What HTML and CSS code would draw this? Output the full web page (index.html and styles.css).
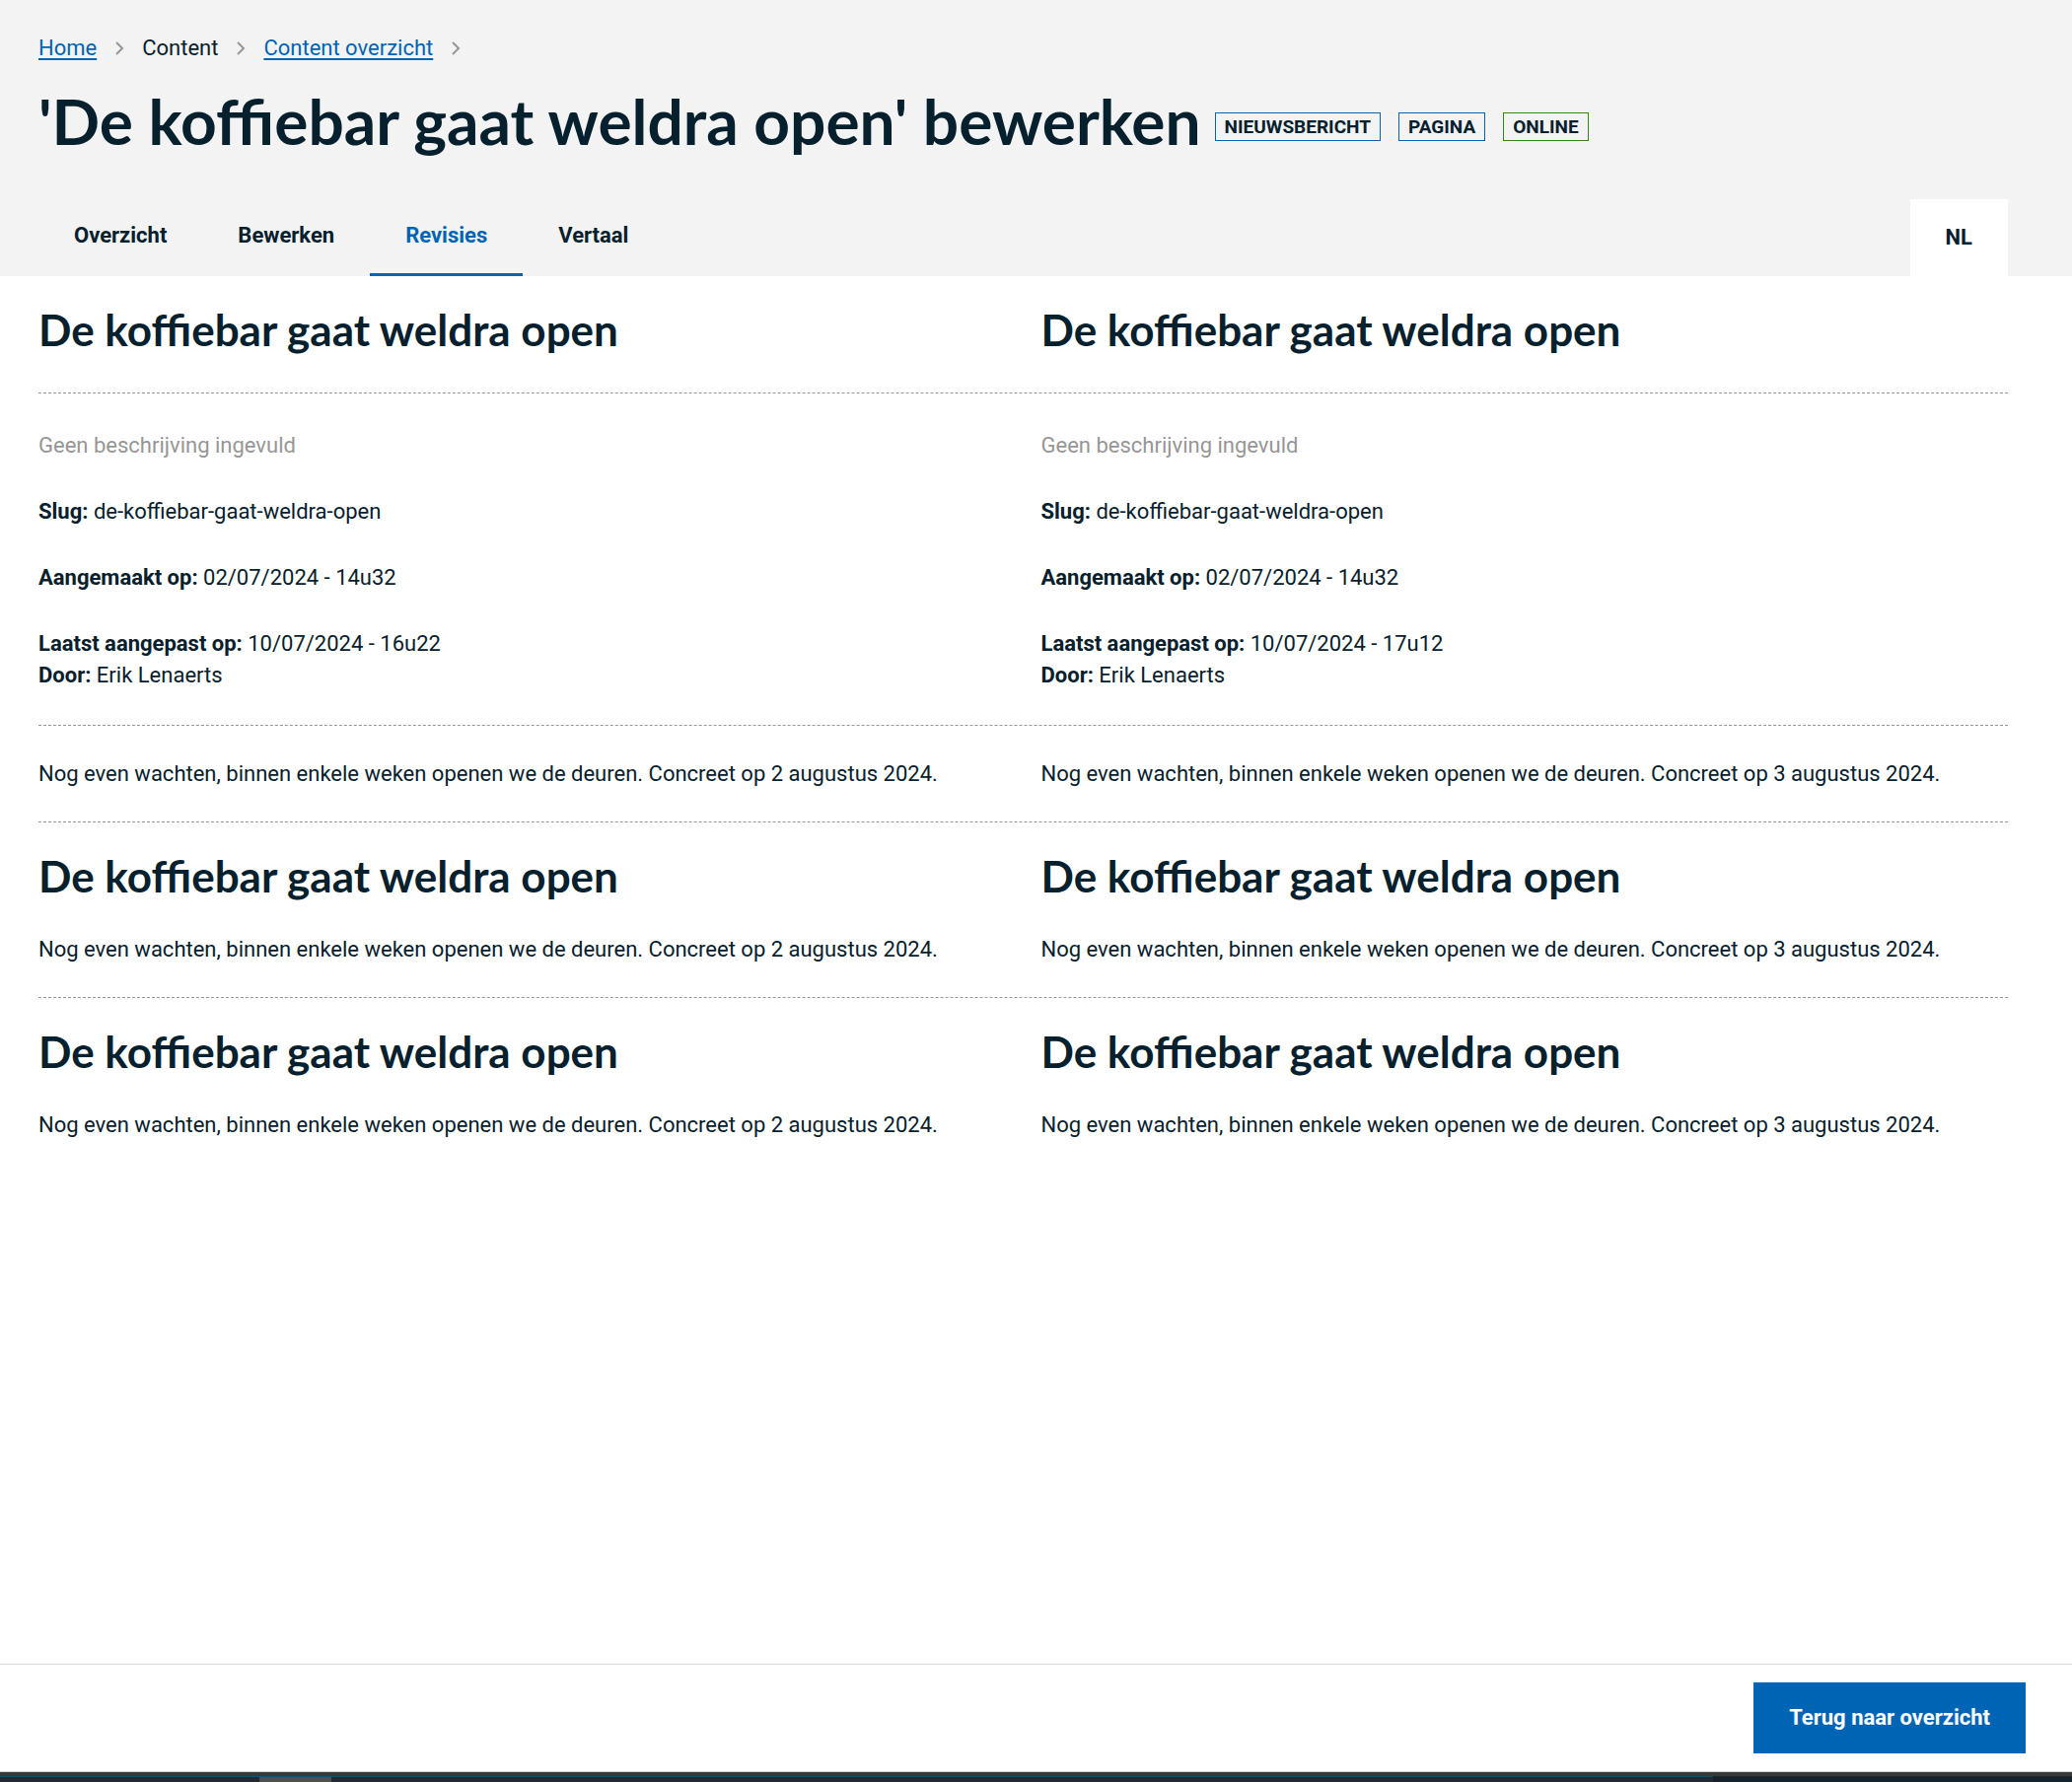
FILE: index.html
```html
<!DOCTYPE html>
<html lang="nl">
<head>
<meta charset="utf-8">
<meta name="viewport" content="width=device-width, initial-scale=1">
<title>'De koffiebar gaat weldra open' bewerken</title>
<link rel="stylesheet" href="styles.css">
</head>
<body>
<header class="page-header">
  <nav class="breadcrumbs" aria-label="Kruimelpad">
    <a href="#">Home</a>
    <svg class="chevron" viewBox="0 0 10 16" aria-hidden="true"><path d="M2 2l6 6-6 6"/></svg>
    <span>Content</span>
    <svg class="chevron" viewBox="0 0 10 16" aria-hidden="true"><path d="M2 2l6 6-6 6"/></svg>
    <a href="#">Content overzicht</a>
    <svg class="chevron" viewBox="0 0 10 16" aria-hidden="true"><path d="M2 2l6 6-6 6"/></svg>
  </nav>
  <div class="title-row">
    <h1>'De koffiebar gaat weldra open' bewerken</h1>
    <div class="labels">
      <span class="label">NIEUWSBERICHT</span>
      <span class="label">PAGINA</span>
      <span class="label label-success">ONLINE</span>
    </div>
  </div>
  <div class="tab-row">
    <nav class="tabs" aria-label="Tabs">
      <a class="tab" href="#">Overzicht</a>
      <a class="tab" href="#">Bewerken</a>
      <a class="tab tab-active" href="#" aria-current="page">Revisies</a>
      <a class="tab" href="#">Vertaal</a>
    </nav>
    <button class="language" type="button">NL</button>
  </div>
</header>
<main class="comparison">
  <section class="row row-title">
    <h2>De koffiebar gaat weldra open</h2>
    <h2>De koffiebar gaat weldra open</h2>
  </section>
  <section class="row row-meta">
    <div class="meta">
      <p class="muted">Geen beschrijving ingevuld</p>
      <p><strong>Slug:</strong> de-koffiebar-gaat-weldra-open</p>
      <p><strong>Aangemaakt op:</strong> 02/07/2024 - 14u32</p>
      <p><strong>Laatst aangepast op:</strong> 10/07/2024 - 16u22<br><strong>Door:</strong> Erik Lenaerts</p>
    </div>
    <div class="meta">
      <p class="muted">Geen beschrijving ingevuld</p>
      <p><strong>Slug:</strong> de-koffiebar-gaat-weldra-open</p>
      <p><strong>Aangemaakt op:</strong> 02/07/2024 - 14u32</p>
      <p><strong>Laatst aangepast op:</strong> 10/07/2024 - 17u12<br><strong>Door:</strong> Erik Lenaerts</p>
    </div>
  </section>
  <section class="row">
    <p>Nog even wachten, binnen enkele weken openen we de deuren. Concreet op 2 augustus 2024.</p>
    <p>Nog even wachten, binnen enkele weken openen we de deuren. Concreet op 3 augustus 2024.</p>
  </section>
  <section class="row">
    <div class="block">
      <h2>De koffiebar gaat weldra open</h2>
      <p>Nog even wachten, binnen enkele weken openen we de deuren. Concreet op 2 augustus 2024.</p>
    </div>
    <div class="block">
      <h2>De koffiebar gaat weldra open</h2>
      <p>Nog even wachten, binnen enkele weken openen we de deuren. Concreet op 3 augustus 2024.</p>
    </div>
  </section>
  <section class="row">
    <div class="block">
      <h2>De koffiebar gaat weldra open</h2>
      <p>Nog even wachten, binnen enkele weken openen we de deuren. Concreet op 2 augustus 2024.</p>
    </div>
    <div class="block">
      <h2>De koffiebar gaat weldra open</h2>
      <p>Nog even wachten, binnen enkele weken openen we de deuren. Concreet op 3 augustus 2024.</p>
    </div>
  </section>
</main>
<footer class="action-bar">
  <button class="button" type="button">Terug naar overzicht</button>
</footer>
<div class="taskbar" aria-hidden="true"><span class="task-space"></span><span class="task"></span><span class="task-fill"></span><span class="tray"></span></div>
</body>
</html>
```
FILE: styles.css
```css
* { box-sizing: border-box; }

body {
  margin: 0;
  min-height: 100vh;
  display: flex;
  flex-direction: column;
  background: #fff;
  color: #06202d;
  font: 22px/32px Roboto, "Liberation Sans", sans-serif;
}

h1, h2, p { margin: 0; }

h1, h2 { font-family: Lato, "Liberation Sans", sans-serif; font-weight: 700; }
h1 { font-size: 64px; line-height: 80px; }
h2 { font-size: 44px; line-height: 44px; }

button { font: inherit; font-weight: 700; border: 0; cursor: pointer; }

.page-header { background: #f3f3f3; padding: 33px 65px 0 39px; }

.breadcrumbs { display: flex; align-items: center; gap: 18px; }
.breadcrumbs a { color: #0064b4; text-decoration-thickness: 2px; text-underline-offset: 3px; }

.chevron {
  width: 10px;
  height: 16px;
  fill: none;
  stroke: #969696;
  stroke-width: 2;
}

.title-row { display: flex; align-items: center; gap: 14px; margin-top: 18px; }
.labels { display: flex; gap: 18px; padding-top: 10px; }

.label {
  border: 1px solid #0064b4;
  padding: 0 9px;
  font-size: 19px;
  line-height: 27px;
  font-weight: 700;
}
.label-success { border-color: #2a8c08; }

.tab-row { display: flex; justify-content: space-between; margin-top: 39px; }
.tabs { display: flex; }

.tab {
  padding: 21px 36px 22px;
  border-bottom: 3px solid transparent;
  color: inherit;
  font-weight: 700;
  text-decoration: none;
}
.tab-active { color: #0064b4; border-color: #0064b4; }

.language { background: #fff; color: inherit; padding: 0 36px; }

.comparison { flex: 1; padding: 0 65px 0 39px; }

.row {
  display: grid;
  grid-template-columns: 1fr 1fr;
  column-gap: 36px;
  padding: 32px 0;
  border-bottom: 1px dashed #969696;
}
.row p { padding-top: 1px; }
.row:last-child { border-bottom: 0; }
.row-title { padding-bottom: 42px; }
.row-meta { padding: 36px 0 34px; }

.meta { display: grid; gap: 34px; }
.muted { color: #969696; }
.block { display: grid; gap: 36px; }

.action-bar {
  display: flex;
  justify-content: flex-end;
  padding: 18px 47px;
  border-top: 1px solid #d8d8d8;
  border-bottom: 1px solid #d0d4d0;
}

.button { background: #0064b4; color: #fff; padding: 20px 36px; }

.taskbar { display: flex; height: 10px; border-top: 4px solid #38393a; background: #1b2b37; }
.task-space { width: 263px; border-top: 1px solid #17506b; }
.task { width: 73px; border-top: 1px solid #17506b; background: #46515b; }
.task-fill { flex: 1; border-top: 1px solid #17506b; }
.tray { width: 364px; border-top: 1px solid #222426; background: #15222c; }
```
